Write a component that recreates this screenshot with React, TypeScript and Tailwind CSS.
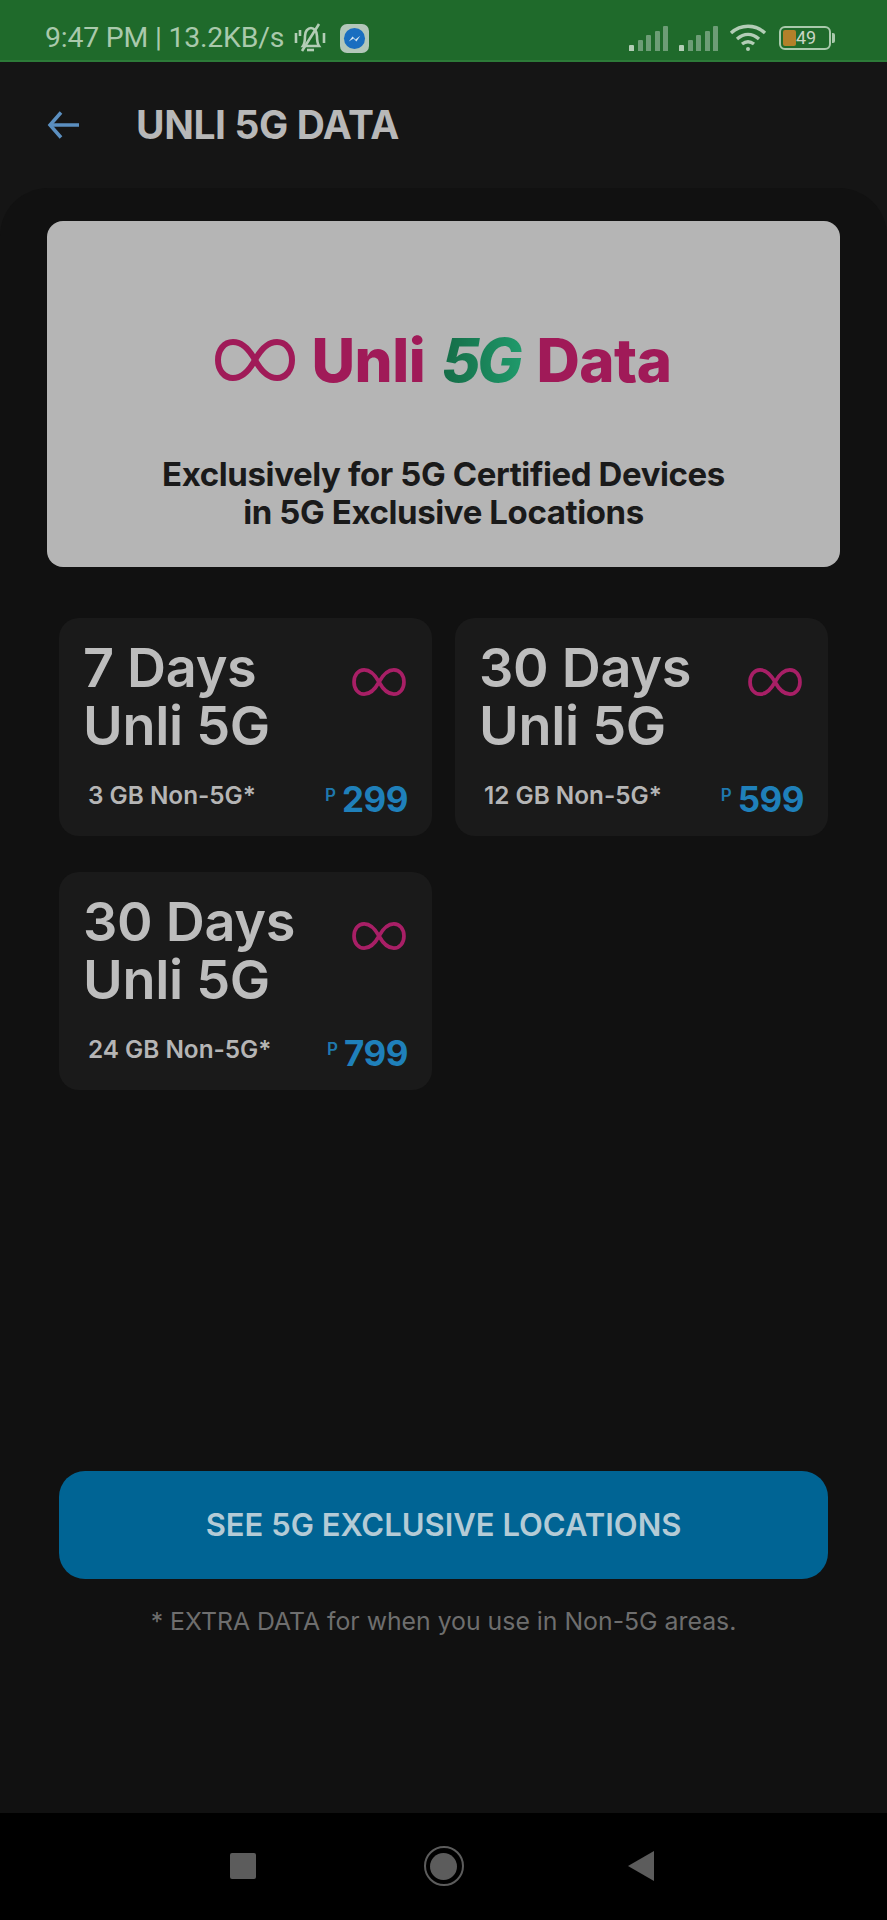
const plans = [
  { days: '7 Days', extra: '3 GB Non-5G*', price: '299' },
  { days: '30 Days', extra: '12 GB Non-5G*', price: '599' },
  { days: '30 Days', extra: '24 GB Non-5G*', price: '799' },
];

function Infinity8({ className, stroke }: { className: string; stroke: number }) {
  return (
    <svg viewBox="0 0 80 44" fill="none" className={className}>
      <path
        d="M40 22C34 11 27 4 18 4C9 4 3 12 3 22C3 32 9 40 18 40C27 40 34 33 40 22C46 11 53 4 62 4C71 4 77 12 77 22C77 32 71 40 62 40C53 40 46 33 40 22Z"
        stroke="currentColor"
        strokeWidth={stroke}
      />
    </svg>
  );
}

function SignalBars() {
  const heights = ['h-[6px]', 'h-[11px]', 'h-[16px]', 'h-[20px]', 'h-[25px]'];
  return (
    <div className="flex items-end gap-[3.5px]">
      {heights.map((h, i) => (
        <div key={h} className={`w-[5px] rounded-t-[1px] ${h} ${i === 0 ? 'bg-[#b3cdb6]' : 'bg-[#6d9d76]'}`} />
      ))}
    </div>
  );
}

function StatusBar() {
  return (
    <div className="flex h-[62px] items-center justify-between border-b-2 border-[#2c7a38] bg-[#1f6a2b] pl-[45px] pr-[52px] pt-[16px] font-['Roboto',sans-serif] text-[#a9c9ac]">
      <div className="flex items-center">
        <span className="text-[28.4px] leading-none tracking-[-0.2px]">9:47 PM | 13.2KB/s</span>
        <svg viewBox="0 0 36 34" fill="none" stroke="#b3cdb6" strokeWidth="2.6" className="ml-[8px] h-[34px] w-[36px]">
          <path d="M11 25c2-3 2-7 2-10c0-5 3-8 6-8s6 3 6 8c0 3 0 7 2 10z" />
          <path d="M15 29h7" />
          <path d="M27 3L10 30" />
          <path d="M4 12v10M8 9v6M32 12v10" />
        </svg>
        <div className="ml-[12px] flex h-[29px] w-[29px] items-center justify-center rounded-[7px] bg-[#b3c7ba]">
          <svg viewBox="0 0 24 24" className="h-[23px] w-[23px]">
            <circle cx="12" cy="12" r="11" fill="#1a6ec0" />
            <path d="M6 15l4-5l3 3l5-4l-4 6l-3-3z" fill="#d6e6f2" />
          </svg>
        </div>
      </div>
      <div className="flex items-center">
        <SignalBars />
        <div className="ml-[11px]">
          <SignalBars />
        </div>
        <svg viewBox="0 0 38 30" fill="none" stroke="#b3cdb6" strokeWidth="3.4" className="ml-[11px] h-[30px] w-[38px]">
          <path d="M2 10c10-9 24-9 34 0" />
          <path d="M8 16c7-6 15-6 22 0" />
          <path d="M13 21c4-3 8-3 12 0" />
          <circle cx="19" cy="26" r="2" fill="#b3cdb6" stroke="none" />
        </svg>
        <div className="ml-[12px] flex h-[24px] w-[52px] items-center rounded-[6px] border-[2.5px] border-[#a9c9ac] p-[2px]">
          <div className="h-full w-[13px] rounded-[2px] bg-[#b3802a]" />
          <span className="text-[18px] leading-none text-[#c9d6c6]">49</span>
        </div>
        <div className="ml-[1px] h-[10px] w-[3px] rounded-r-[2px] bg-[#a9c9ac]" />
      </div>
    </div>
  );
}

function PlanCard({ days, extra, price }: { days: string; extra: string; price: string }) {
  return (
    <div className="flex h-[218px] flex-col rounded-[20px] bg-[#1a1a1a] px-[24px] pt-[21px]">
      <div className="flex justify-between">
        <div className="text-[54px] font-semibold leading-[58px] tracking-[-0.3px] text-[#bdbdbd]">
          <div>{days}</div>
          <div>Unli 5G</div>
        </div>
        <Infinity8 className="mr-[2px] mt-[28px] h-[30px] w-[54px] text-[#a81f66]" stroke={5.5} />
      </div>
      <div className="mt-[21px] flex items-center justify-between pl-[5px]">
        <span className="mb-[2px] text-[24.3px] font-semibold text-[#b5b5b5]">{extra}</span>
        <div className="mt-[6px] flex items-center">
          <span className="mb-[8px] mr-[6px] text-[17px] font-semibold text-[#1f78ad]">P</span>
          <span className="text-[35px] font-bold leading-none tracking-[-0.5px] text-[#1f80ba]">{price}</span>
        </div>
      </div>
    </div>
  );
}

export default function App() {
  return (
    <div className="flex h-[1920px] w-[887px] flex-col overflow-hidden bg-[#151515] font-['Inter',sans-serif]">
      <StatusBar />

      <div className="flex h-[126px] items-center pl-[47px]">
        <svg viewBox="0 0 32 28" fill="none" stroke="#5b8fc0" strokeWidth="3.5" className="h-[28px] w-[32px]">
          <path d="M14 1.5L3 14L14 26.5" />
          <path d="M3 14H32" />
        </svg>
        <h1 className="ml-[57px] text-[39px] font-bold tracking-[-0.4px] text-[#b8b8b8]">UNLI 5G DATA</h1>
      </div>

      {/* Main panel */}
      <div className="flex flex-1 flex-col rounded-t-[48px] bg-[#111111] pt-[33px]">
        <div className="mx-[47px] flex h-[346px] flex-col items-center rounded-[16px] bg-[#b5b5b5] pt-[109px]">
          <div className="flex items-center text-[60px] font-extrabold leading-none tracking-[-0.5px] text-[#a01a58]">
            <Infinity8 className="h-[44px] w-[80px] text-[#a01a58]" stroke={6} />
            <span className="ml-[16px]">Unli</span>
            <span className="ml-[16px] bg-linear-to-r from-[#146b46] to-[#1f9a6b] bg-clip-text pr-[3px] italic tracking-[-3px] text-transparent">5G</span>
            <span className="ml-[14px]">Data</span>
          </div>
          <p className="mt-[65px] text-center text-[33px] font-bold leading-[38px] tracking-[-0.4px] text-[#1a1a1a]">
            Exclusively for 5G Certified Devices
            <br />
            in 5G Exclusive Locations
          </p>
        </div>

        <div className="mx-[59px] mt-[51px] grid grid-cols-2 gap-x-[23px] gap-y-[36px]">
          {plans.map((plan) => (
            <PlanCard key={plan.extra} {...plan} />
          ))}
        </div>

        <button className="mx-[59px] mt-[381px] flex h-[108px] items-center justify-center rounded-[26px] bg-[#006494] text-[31px] font-semibold text-[#b4cbd6]">
          SEE 5G EXCLUSIVE LOCATIONS
        </button>
        <p className="mt-[24px] text-center text-[24.8px] text-[#6e6e6e]">
          * EXTRA DATA for when you use in Non-5G areas.
        </p>
      </div>

      {/* Nav bar */}
      <div className="flex h-[107px] items-center justify-center bg-black pb-[1px] pr-[4px]">
        <div className="h-[26px] w-[26px] rounded-[2px] bg-[#5c5c5c]" />
        <div className="ml-[168px] flex h-[40px] w-[40px] items-center justify-center rounded-full border-[2.5px] border-[#5c5c5c]">
          <div className="h-[27px] w-[27px] rounded-full bg-[#5c5c5c]" />
        </div>
        <svg viewBox="0 0 26 30" className="ml-[164px] h-[30px] w-[26px]">
          <path d="M26 0V30L0 15Z" fill="#5c5c5c" />
        </svg>
      </div>
    </div>
  );
}
